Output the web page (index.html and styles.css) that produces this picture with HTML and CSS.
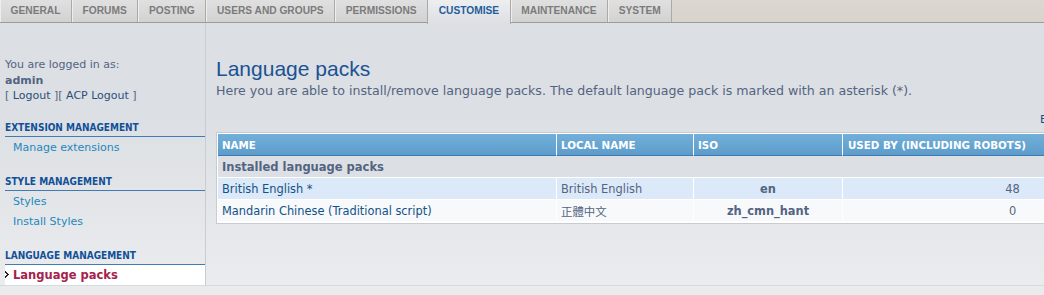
FILE: index.html
```html
<!DOCTYPE html>
<html lang="en">
<head>
<meta charset="utf-8">
<title>Language packs</title>
<link rel="stylesheet" href="styles.css">
</head>
<body>
<div class="tabbar">
  <ul class="tabs">
    <li><a href="#">GENERAL</a></li>
    <li><a href="#">FORUMS</a></li>
    <li><a href="#">POSTING</a></li>
    <li><a href="#">USERS AND GROUPS</a></li>
    <li><a href="#">PERMISSIONS</a></li>
    <li class="active"><a href="#">CUSTOMISE</a></li>
    <li><a href="#">MAINTENANCE</a></li>
    <li><a href="#">SYSTEM</a></li>
  </ul>
</div>
<div class="wrap">
  <aside class="side">
    <div class="login">
      <p>You are logged in as:</p>
      <p class="user">admin</p>
      <p>[ <a href="#">Logout</a> ][ <a href="#">ACP Logout</a> ]</p>
    </div>
    <div class="sec">
      <h3>EXTENSION MANAGEMENT</h3>
      <ul><li><a href="#">Manage extensions</a></li></ul>
    </div>
    <div class="sec">
      <h3>STYLE MANAGEMENT</h3>
      <ul><li><a href="#">Styles</a></li><li><a href="#">Install Styles</a></li></ul>
    </div>
    <div class="sec">
      <h3>LANGUAGE MANAGEMENT</h3>
      <ul><li class="current"><svg class="arrow" width="5" height="7" viewBox="0 0 5 7"><path d="M0 0h1v1h1v1h1v1h1v1h-1v1h-1v1h-1v1h-1v-2h1v-1h1v-1h-1v-1h-1z" fill="#222"/></svg><a href="#">Language packs</a></li></ul>
    </div>
  </aside>
  <main class="main">
    <h1>Language packs</h1>
    <p class="desc">Here you are able to install/remove language packs. The default language pack is marked with an asterisk (*).</p>
    <p class="extra"><a href="#">Edit language pack details</a></p>
    <div class="panel">
      <table>
        <thead>
          <tr><th class="c1">NAME</th><th class="c2">LOCAL NAME</th><th class="c3">ISO</th><th class="c4">USED BY (INCLUDING ROBOTS)</th></tr>
        </thead>
        <tbody>
          <tr class="cat"><td colspan="4">Installed language packs</td></tr>
          <tr class="row1"><td><a href="#">British English *</a></td><td class="local">British English</td><td class="iso">en</td><td class="num">48</td></tr>
          <tr class="row2"><td><a href="#">Mandarin Chinese (Traditional script)</a></td><td class="local">正體中文</td><td class="iso">zh_cmn_hant</td><td class="num">0</td></tr>
        </tbody>
      </table>
    </div>
  </main>
</div>
</body>
</html>
```
FILE: styles.css
```css
html, body {
  margin: 0;
  padding: 0;
  overflow: hidden;
}
body {
  background: #e9ebed;
  font-family: "DejaVu Sans", Verdana, sans-serif;
  font-size: 11px;
  color: #536482;
}
a { text-decoration: none; }
p { margin: 0; }

/* Tabs */
.tabbar {
  height: 22px;
  background: linear-gradient(#dcd8d1, #d8d4cc);
  border-bottom: 1px solid #9c9d99;
  box-shadow: 0 1px 0 #ffffff;
}
.tabs {
  list-style: none;
  margin: 0;
  padding: 0;
  display: flex;
  height: 22px;
}
.tabs li {
  height: 22px;
  background: linear-gradient(#e0e0e0, #d2d2d2);
  border-right: 1px solid #aaaaaa;
  box-shadow: inset 1px 0 0 #eeeeee;
}
.tabs a {
  display: block;
  padding: 0 10.6px;
  line-height: 22px;
  font-family: "Liberation Sans", Arial, sans-serif;
  font-weight: bold;
  font-size: 10.2px;
  color: #7b7b7b;
}
.tabs li.active {
  position: relative;
  height: 24px;
  background: linear-gradient(#edeef0, #dcdfe3);
  border-left: 1px solid #aaaaaa;
  margin-left: -1px;
  box-shadow: none;
}
.tabs li.active a {
  color: #1f5d9c;
}

/* Layout */
.wrap {
  display: flex;
  width: 1200px;
  background: linear-gradient(#dcdfe3 0%, #dcdfe3 35%, #eaecee 100%);
  border-bottom: 1px dotted #d2d5d9;
}
.side {
  width: 200px;
  flex: none;
  padding: 34px 0 0 5px;
  border-right: 1px solid #c9ccd1;
}
.login p {
  line-height: 15.5px;
  color: #536482;
}
.login .user { font-weight: bold; }
.login a { color: #2b4f7c; }

.sec { margin-top: 18px; }
.sec h3 {
  margin: 0;
  font-family: "DejaVu Sans Condensed", "DejaVu Sans", sans-serif;
  font-weight: bold;
  font-size: 10px;
  line-height: 12px;
  padding-bottom: 2px;
  color: #115098;
  border-bottom: 1px solid #3f7bb4;
}
.sec ul {
  list-style: none;
  margin: 0;
  padding: 1px 0 0 0;
}
.sec li {
  height: 20px;
  line-height: 20px;
  display: flex;
  align-items: center;
}
.sec li a {
  padding-left: 8px;
  color: #2388bd;
}
.sec li.current {
  background: #ffffff;
  margin-top: -1px;
}
.sec li.current a {
  padding-left: 3px;
  color: #a6214b;
  font-weight: bold;
  font-size: 11.5px;
}
.arrow { flex: none; }

/* Main */
.main {
  flex: none;
  width: 980px;
  padding: 34px 0 0 10px;
}
.main h1 {
  margin: 0;
  font-family: "Liberation Sans", Arial, sans-serif;
  font-weight: normal;
  font-size: 21px;
  line-height: 24px;
  color: #1b5293;
}
.desc {
  margin-top: 2px;
  line-height: 15px;
  font-size: 12.6px;
  color: #536482;
}
.extra {
  margin-top: 14px;
  line-height: 15px;
  padding-left: 824px;
  white-space: nowrap;
}
.extra a { color: #105289; }

.panel {
  margin-top: 5px;
  width: 964px;
  background: #ffffff;
  border: 1px solid #c8ccd1;
  padding: 1px;
}
table {
  border-collapse: separate;
  border-spacing: 0;
  table-layout: fixed;
  width: 964px;
}
th, td {
  box-sizing: border-box;
  padding: 0 4px;
  text-align: left;
  white-space: nowrap;
  overflow: hidden;
}
th {
  height: 22px;
  background: linear-gradient(#72b0da, #5d9cca);
  color: #ffffff;
  font-family: "DejaVu Sans", sans-serif;
  font-weight: bold;
  font-size: 10.3px;
  border-bottom: 1px solid #3e7ab3;
  border-left: 1px solid #ffffff;
}
th.c1 { width: 338px; border-left: 0; }
th.c2 { width: 137px; }
th.c3 { width: 149px; }
th.c4 { width: 340px; padding-left: 5px; }
td {
  height: 22px;
  font-size: 11.4px;
  border-bottom: 1px solid #ffffff;
  border-left: 1px solid #ffffff;
}
td:first-child { border-left: 0; }
.cat td {
  background: #dcdfe3;
  font-weight: bold;
  font-size: 11.5px;
  color: #536482;
}
.row1 td { background: #dce9f8; }
.row2 td { background: #f8f9fa; }
td a { color: #105289; }
td.local {
  color: #536482;
  font-family: "DejaVu Sans", "Noto Sans CJK TC", sans-serif;
}
td.iso {
  text-align: center;
  font-weight: bold;
  color: #536482;
}
td.num {
  text-align: center;
  color: #536482;
}
```
